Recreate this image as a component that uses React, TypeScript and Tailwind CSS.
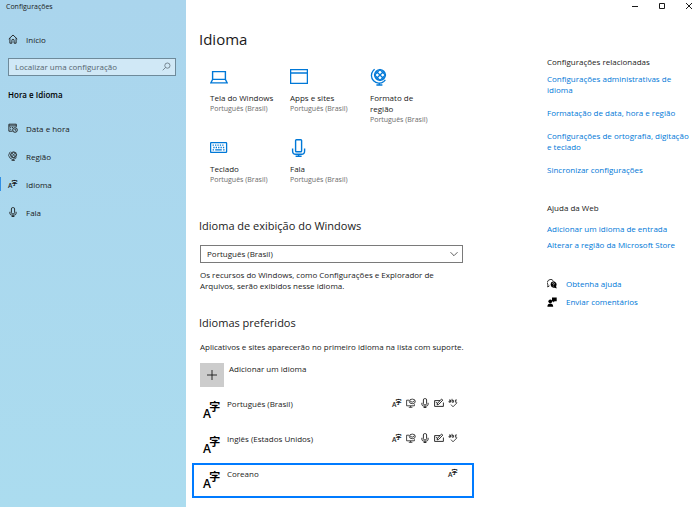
import React from "react";

type IconProps = { className?: string };

const stroke = {
  fill: "none",
  stroke: "currentColor",
  "aria-hidden": true,
} as const;

function HomeIcon() {
  return (
    <svg {...stroke} viewBox="0 0 10 10" className="size-[10px]" strokeWidth="0.9">
      <path d="M0.8 5 5 1l4.2 4M1.9 4.2v5h2V6.4a1.1 1.1 0 0 1 2.2 0v2.8h2v-5" />
    </svg>
  );
}

function SearchIcon() {
  return (
    <svg {...stroke} viewBox="0 0 10 10" className="size-[9px]" strokeWidth="0.8">
      <circle cx="6" cy="4" r="2.9" />
      <path d="M3.9 6.1.8 9.2" />
    </svg>
  );
}

function CalendarIcon() {
  return (
    <svg {...stroke} viewBox="0 0 10 10" className="size-[10px]" strokeWidth="0.9">
      <path d="M4.5 8.2H.9V1.2h7.4v2.6M.9 2.9h7.4M2.2 4.6h1M4 4.6h1M2.2 6.3h1" />
      <circle cx="7" cy="7" r="2.3" />
      <path d="M7 5.8V7.1h1" />
    </svg>
  );
}

function GlobeIcon({ className = "size-[10px]" }: IconProps) {
  return (
    <svg {...stroke} viewBox="0 0 18 18" className={className} strokeWidth="1.3">
      <circle cx="10" cy="7" r="5.4" />
      <path d="M6.2 3.2l7.6 7.6M13.8 3.2l-7.6 7.6M10 1.6l5.4 5.4L10 12.4 4.6 7z" />
      <path d="M4.6 1.2 3.2 2.6a7.6 7.6 0 0 0 10.6 10.8l1.6-1.5M9.4 15v2M6.4 17h6" />
    </svg>
  );
}

function LanguageIcon({ className = "size-[10px]" }: IconProps) {
  return (
    <svg viewBox="0 0 18 18" className={`overflow-visible ${className}`} fill="currentColor" aria-hidden="true">
      <text x="0" y="17" fontSize="12" fontWeight="600" fontFamily="'Open Sans', sans-serif">A</text>
      <text x="6.2" y="10.4" fontSize="11" fontWeight="700" fontFamily="'Noto Sans CJK SC', sans-serif">字</text>
    </svg>
  );
}

function MicIcon({ className = "size-[10px]" }: IconProps) {
  return (
    <svg {...stroke} viewBox="0 0 10 10" className={className} strokeWidth="0.9">
      <rect x="3.4" y="0.6" width="3.2" height="6.2" rx="1.3" />
      <path d="M1.9 4.8v1.4c0 1.2.8 1.9 1.9 1.9h2.4c1.1 0 1.9-.7 1.9-1.9V4.8M5 8.1v1.5M3.6 9.5h2.8" />
    </svg>
  );
}

function LaptopIcon() {
  return (
    <svg {...stroke} viewBox="0 0 18 18" className="size-[18px]" strokeWidth="1.4">
      <path d="M2.6 11.4V3.6h12.8v7.8M2.6 11.4h12.8l1.8 3.5H.8z" />
    </svg>
  );
}

function WindowIcon() {
  return (
    <svg {...stroke} viewBox="0 0 18 18" className="size-[18px]" strokeWidth="1.3">
      <path d="M.6 1.6h16.8v13.8H.6zM.6 5h16.8" />
    </svg>
  );
}

function KeyboardIcon() {
  return (
    <svg {...stroke} viewBox="0 0 18 18" className="size-[18px]" strokeWidth="1.3">
      <rect x="0.6" y="3.6" width="16" height="9.8" rx="0.6" />
      <path strokeDasharray="1.3 1.1" d="M2.6 6.2h12M3.3 8.5h11.5" />
      <path d="M2.6 10.9h1.4M5.2 10.9h6.6M13.1 10.9h1.5" />
    </svg>
  );
}

function BigMicIcon() {
  return (
    <svg {...stroke} viewBox="0 0 18 18" className="size-[18px]" strokeWidth="1.4">
      <rect x="5.6" y="0.7" width="6" height="12" rx="0.8" />
      <path d="M2.6 9.5v2.400c0 2 1.200 3.300 3.200 3.300h5.600c2 0 3.200-1.300 3.200-3.300V9.500M8.600 15.200v2.200M5.600 17.300h6" />
    </svg>
  );
}

function DisplayIcon() {
  return (
    <svg {...stroke} viewBox="0 0 10 10" className="size-[10px]" strokeWidth="0.8">
      <path d="M3 2.2H.6v5.600h7.800V6.200M2.800 9.300h3.600M4.600 7.800v1.500" />
      <ellipse cx="6.300" cy="3.400" rx="3" ry="2.300" />
      <path d="m4 3 2.200 1.200 2.600-1.500" />
    </svg>
  );
}

function HandwritingIcon() {
  return (
    <svg {...stroke} viewBox="0 0 10 10" className="size-[10px]" strokeWidth="0.9">
      <path d="M6 2.600H.6v5.800h8.800V4.500M3 6.900l.6-1.700L7.600 1l1.200 1.100-4 4.200zM1.800 4.300l1.800 1" />
    </svg>
  );
}

function SpellIcon() {
  return (
    <svg {...stroke} viewBox="0 0 10 10" className="size-[10px]" strokeWidth="0.8">
      <path d="M1 2h1.500v2.200H1V3.100h1.500M4 .8v3.400h1.500V2.400H4M9 2H7.400v2.200H9M3 6.600l2 2.200 4-4" />
    </svg>
  );
}

function HelpIcon() {
  return (
    <svg viewBox="0 0 10 10" className="size-[10px]" aria-hidden="true">
      <path d="M2.500 6.800.7 8l.3-2A3.200 3.200 0 1 1 6.300 1.700" fill="none" stroke="currentColor" strokeWidth="0.8" />
      <path d="M6.300 2.200a3.300 3.300 0 0 1 2.800 5l.6 2.300-2-.8A3.300 3.300 0 1 1 6.300 2.200z" fill="currentColor" />
      <path d="M5.300 4.700c0-1.400 2.100-1.300 2 0 0 .7-1 .6-1 1.500M6.300 6.800v.7" fill="none" stroke="white" strokeWidth="0.6" />
    </svg>
  );
}

function FeedbackIcon() {
  return (
    <svg viewBox="0 0 10 10" className="size-[10px]" fill="currentColor" aria-hidden="true">
      <circle cx="3.300" cy="4.300" r="1.900" />
      <path d="M.4 9.800C.4 7.600 1.600 6.600 3.300 6.600s2.900 1 2.900 3.200zM5 .6h4.700v3.600H7.600L6.200 5.600V4.200H5z" />
    </svg>
  );
}

const navItems = [
  { label: "Data e hora", icon: <CalendarIcon /> },
  { label: "Região", icon: <GlobeIcon /> },
  { label: "Idioma", icon: <LanguageIcon />, active: true },
  { label: "Fala", icon: <MicIcon /> },
];

const tiles = [
  { label: "Tela do Windows", icon: <LaptopIcon /> },
  { label: "Apps e sites", icon: <WindowIcon /> },
  { label: "Formato de região", icon: <GlobeIcon className="size-[18px]" /> },
  { label: "Teclado", icon: <KeyboardIcon /> },
  { label: "Fala", icon: <BigMicIcon /> },
];

const languages = [
  { label: "Português (Brasil)", full: true },
  { label: "Inglês (Estados Unidos)", full: true },
  { label: "Coreano", full: false, selected: true },
];

function Sidebar() {
  return (
    <aside className="w-[186px] shrink-0 bg-linear-to-b from-[#aad5ed] to-[#abdcef]">
      <div className="pl-1.5 text-[7px] leading-[14px]">Configurações</div>
      <a href="#inicio" className="mt-[11px] flex h-7 items-center gap-2 pl-2">
        <HomeIcon />
        Início
      </a>
      <div className="mt-[5px] mr-2.5 ml-2 flex h-[18px] items-center border border-[#6e8a9a] bg-[#d0e8f6] pr-1 pb-px pl-1.5 text-[#56656e]">
        <input
          type="text"
          aria-label="Localizar uma configuração"
          placeholder="Localizar uma configuração"
          className="min-w-0 flex-1 bg-transparent outline-none placeholder:text-[#56656e]"
        />
        <SearchIcon />
      </div>
      <h2 className="mt-[13px] pl-2 font-semibold text-black">Hora e Idioma</h2>
      <nav className="mt-3.5">
        {navItems.map((item) => (
          <a key={item.label} href="#" className="flex h-7 items-center">
            <span className={item.active ? "h-3.5 w-px bg-[#2f8fe6]" : "h-3.5 w-px"} />
            <span className="mr-2 ml-[7px]">{item.icon}</span>
            {item.label}
          </a>
        ))}
      </nav>
    </aside>
  );
}

function WindowControls() {
  return (
    <div className="flex h-3.5 items-center justify-end gap-[17px] pr-1.5">
      <button type="button" aria-label="Minimizar">
        <svg {...stroke} viewBox="0 0 10 10" className="size-[10px]"><path d="M2 4.500h6" /></svg>
      </button>
      <button type="button" aria-label="Maximizar">
        <svg {...stroke} viewBox="0 0 10 10" className="size-[10px]"><path d="M2.500 1.500h5v5h-5z" /></svg>
      </button>
      <button type="button" aria-label="Fechar">
        <svg {...stroke} viewBox="0 0 10 10" className="size-[10px]"><path d="m2 1 6 6M8 1 2 7" /></svg>
      </button>
    </div>
  );
}

function Content() {
  return (
    <main className="min-w-0 flex-1 pl-1.5">
      <section className="max-w-[271px] pl-[7px]">
        <h1 className="mt-[15px] text-[15px] leading-5">Idioma</h1>
        <div className="mt-[19px] grid grid-cols-[80px_80px_64px] gap-y-3.5 pl-[11px]">
          {tiles.map((tile) => (
            <div key={tile.label}>
              <div className="text-[#0078d7]">{tile.icon}</div>
              <div className="mt-1.5">{tile.label}</div>
              <div className="text-[7px] whitespace-nowrap text-[#6b6b6b]">Português (Brasil)</div>
            </div>
          ))}
        </div>
        <h2 className="mt-[33px] text-[11px] leading-4">
          <label htmlFor="display-language">Idioma de exibição do Windows</label>
        </h2>
        <div className="mt-[11px] ml-px grid items-center">
          <select
            id="display-language"
            className="col-start-1 row-start-1 h-[18px] appearance-none border border-[#7a7a7a] bg-white pb-px pl-1.5"
          >
            <option>Português (Brasil)</option>
          </select>
          <svg {...stroke} viewBox="0 0 10 10" className="pointer-events-none col-start-1 row-start-1 mr-1 size-[10px] justify-self-end" strokeWidth="0.7">
            <path d="m1.500 3.200 3.500 3.500 3.500-3.500" />
          </svg>
        </div>
        <p className="mt-1.5 ml-px">
          Os recursos do Windows, como Configurações e Explorador de Arquivos, serão exibidos nesse idioma.
        </p>
        <h2 className="mt-6 text-[11px] leading-4">Idiomas preferidos</h2>
        <p className="mt-2.5 ml-px whitespace-nowrap">
          Aplicativos e sites aparecerão no primeiro idioma na lista com suporte.
        </p>
        <button type="button" className="mt-[11px] ml-px flex items-start gap-[5px]">
          <span className="flex size-6 items-center justify-center bg-[#cccccc]">
            <svg {...stroke} viewBox="0 0 10 10" className="size-[10px]" strokeWidth="0.9"><path d="M5 0v10M0 5h10" /></svg>
          </span>
          Adicionar um idioma
        </button>
      </section>
      <ul className="mt-1.5 max-w-[282px]">
        {languages.map((language) => (
          <li
            key={language.label}
            className={
              language.selected
                ? "flex h-[35px] items-start border-2 border-[#007bff] pt-[3px] pr-3.5 pl-[9px]"
                : "flex h-[35px] items-start border-2 border-transparent pt-[3px] pr-3.5 pl-[9px]"
            }
          >
            <LanguageIcon className="mt-[3px] mr-1.5 size-[18px] text-black" />
            <span className="flex-1">{language.label}</span>
            <span className="flex gap-1">
              <LanguageIcon />
              {language.full && (
                <>
                  <DisplayIcon />
                  <MicIcon />
                  <HandwritingIcon />
                  <SpellIcon />
                </>
              )}
            </span>
          </li>
        ))}
      </ul>
    </main>
  );
}

function Related() {
  return (
    <aside className="w-[153px] shrink-0 pr-2">
      <h2 className="mt-[42px]">Configurações relacionadas</h2>
      <ul className="mt-1.5 space-y-3 text-[#0078d7]">
        <li><a href="#">Configurações administrativas de idioma</a></li>
        <li><a href="#">Formatação de data, hora e região</a></li>
        <li><a href="#">Configurações de ortografia, digitação e teclado</a></li>
        <li><a href="#">Sincronizar configurações</a></li>
      </ul>
      <h2 className="mt-[27px]">Ajuda da Web</h2>
      <ul className="mt-2.5 space-y-[5px] text-[#0078d7]">
        <li><a href="#">Adicionar um idioma de entrada</a></li>
        <li><a href="#">Alterar a região da Microsoft Store</a></li>
      </ul>
      <ul className="mt-7 space-y-[7px] text-[#0078d7]">
        <li><a href="#" className="flex items-center gap-[9px]"><span className="text-black"><HelpIcon /></span>Obtenha ajuda</a></li>
        <li><a href="#" className="flex items-center gap-[9px]"><span className="text-black"><FeedbackIcon /></span>Enviar comentários</a></li>
      </ul>
    </aside>
  );
}

export default function App() {
  return (
    <div className="flex min-h-screen bg-white font-['Open_Sans','Noto_Sans',sans-serif] text-[8px] leading-[11px] text-[#1a1a1a]">
      <Sidebar />
      <div className="min-w-0 flex-1">
        <WindowControls />
        <div className="flex">
          <Content />
          <Related />
        </div>
      </div>
    </div>
  );
}
